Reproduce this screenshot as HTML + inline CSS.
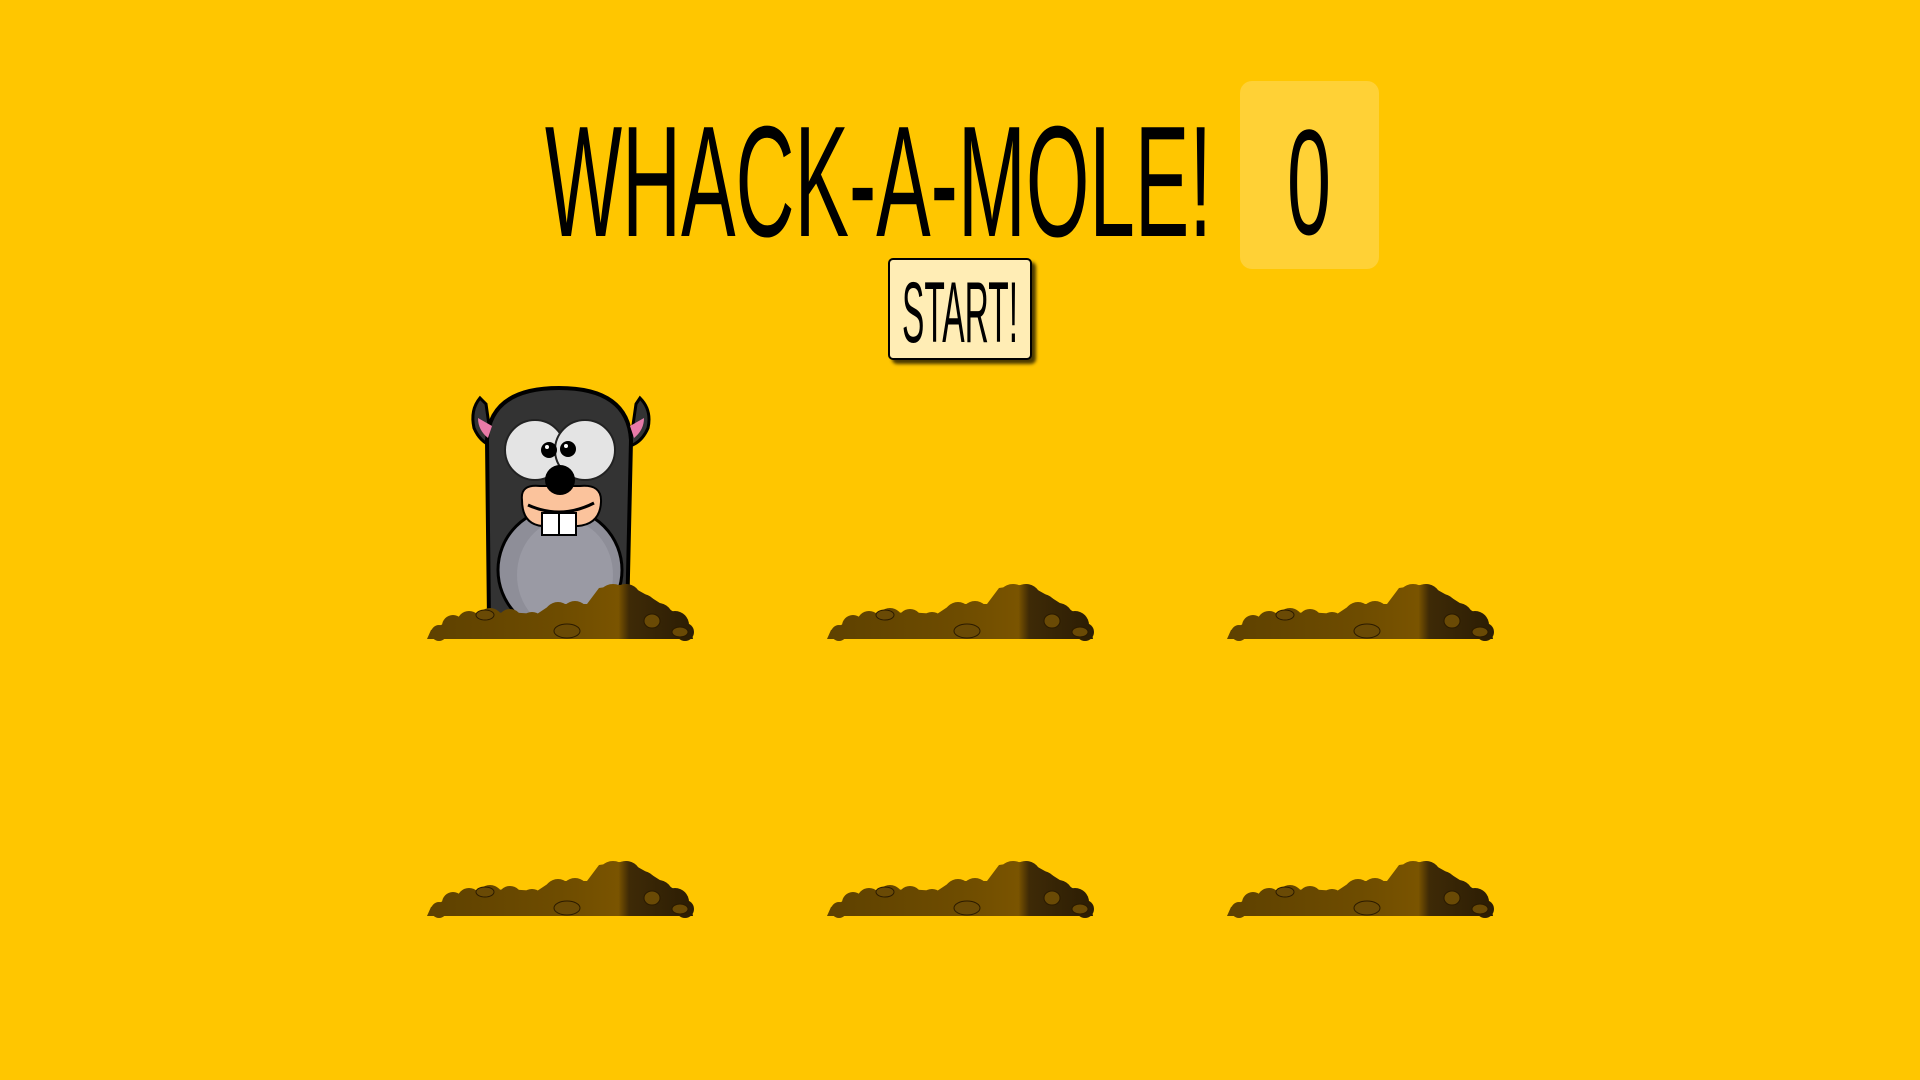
<!DOCTYPE html>
<html><head><meta charset="utf-8"><style>
html,body{margin:0;padding:0;width:1920px;height:1080px;background:#ffc600;overflow:hidden;font-family:"Liberation Sans Narrow","Liberation Sans",sans-serif}
#score{position:absolute;left:1240px;top:81px;width:139px;height:188px;background:#ffd136;border-radius:12px}
#btn{position:absolute;left:888px;top:258px;width:140px;height:98px;background:#ffedb5;border:2px solid #000;border-radius:5px;box-shadow:4px 4px 3px rgba(0,0,0,.7)}
svg{position:absolute;left:0;top:0}
</style></head><body>
<div id="score"></div>
<div id="btn"></div>
<svg width="1920" height="1080" viewBox="0 0 1920 1080">
<defs>
<linearGradient id="dg" gradientUnits="userSpaceOnUse" x1="0" x2="266" y1="0" y2="0">
<stop offset="0" stop-color="#5e4100"/><stop offset="0.5" stop-color="#6e4c00"/>
<stop offset="0.72" stop-color="#7a5400"/><stop offset="0.76" stop-color="#3e2a06"/><stop offset="1" stop-color="#2c1d04"/>
</linearGradient>
<g id="dirt">
<g fill="url(#dg)">
<path d="M0 61 L4 52 L20 44 L40 38 L80 34 L110 36 L125 26 L160 26 L172 10 L200 6 L225 20 L250 36 L264 50 L266 61 Z"/>
<circle cx="12" cy="55" r="8"/><circle cx="26" cy="48" r="11"/><circle cx="42" cy="45" r="12"/>
<circle cx="63" cy="43" r="13"/><circle cx="83" cy="43" r="12"/><circle cx="105" cy="46" r="12"/>
<circle cx="131" cy="38" r="14"/><circle cx="148" cy="37" r="14"/><circle cx="171" cy="42" r="14"/>
<circle cx="186" cy="22" r="16"/><circle cx="199" cy="21" r="15"/><circle cx="192" cy="42" r="19"/>
<circle cx="215" cy="31" r="15"/><circle cx="231" cy="40" r="15"/><circle cx="248" cy="47" r="14"/><circle cx="258" cy="54" r="9"/>
</g>
<g fill="#6a4a05" stroke="#2a1a00" stroke-width="1">
<ellipse cx="58" cy="37" rx="9" ry="5"/><ellipse cx="140" cy="53" rx="13" ry="7"/><ellipse cx="225" cy="43" rx="8" ry="7"/><ellipse cx="253" cy="54" rx="8" ry="5"/>
</g>
</g>
</defs>
<text x="545" y="236" font-family="Liberation Sans Narrow, Liberation Sans, sans-serif" font-size="158" textLength="667" lengthAdjust="spacingAndGlyphs" fill="#000">WHACK-A-MOLE!</text>
<text x="1309" y="234" text-anchor="middle" font-family="Liberation Sans Narrow, Liberation Sans, sans-serif" font-size="150" textLength="44" lengthAdjust="spacingAndGlyphs" fill="#000">0</text>
<text x="902" y="342" font-family="Liberation Sans Narrow, Liberation Sans, sans-serif" font-size="86" textLength="116" lengthAdjust="spacingAndGlyphs" fill="#000">START!</text>
<!-- mole -->
<g>
<path d="M486 404 L482 400 L480 398 Q470 410 474 428 Q480 442 492 446 Z" fill="#333" stroke="#000" stroke-width="3"/>
<path d="M636 404 L640 398 Q652 410 648 428 Q642 442 630 446 Z" fill="#333" stroke="#000" stroke-width="3"/>
<path d="M489 620 L487 440 Q490 388 559 388 Q628 388 631 440 L627 620 Z" fill="#333" stroke="#000" stroke-width="4"/>
<path d="M478 418 L492 426 L488 438 Q478 430 478 418Z" fill="#e87aa8"/>
<path d="M644 418 L630 426 L634 438 Q644 430 644 418Z" fill="#e87aa8"/>
<ellipse cx="560" cy="570" rx="62" ry="62" fill="#8e8e98" stroke="#000" stroke-width="3"/>
<ellipse cx="565" cy="575" rx="48" ry="55" fill="#9a9aa4"/>
<ellipse cx="535" cy="450" rx="30" ry="30" fill="#e4e4e4" stroke="#222" stroke-width="2"/>
<ellipse cx="585" cy="450" rx="30" ry="30" fill="#e4e4e4" stroke="#222" stroke-width="2"/>
<circle cx="549" cy="450" r="8" fill="#000"/><circle cx="568" cy="449" r="8" fill="#000"/>
<circle cx="547" cy="447" r="2" fill="#fff"/><circle cx="566" cy="446" r="2" fill="#fff"/>
<path d="M522 500 Q520 484 540 486 L580 486 Q602 484 601 502 Q600 524 578 526 L542 526 Q522 524 522 500Z" fill="#fbc39c" stroke="#000" stroke-width="2"/>
<path d="M528 505 Q561 520 594 503" fill="none" stroke="#000" stroke-width="3"/>
<rect x="542" y="513" width="17" height="22" fill="#fff" stroke="#000" stroke-width="2"/>
<rect x="559" y="513" width="17" height="22" fill="#fff" stroke="#000" stroke-width="2"/>
<circle cx="560" cy="480" r="15" fill="#000"/>
</g>
<use href="#dirt" x="427" y="578"/>
<use href="#dirt" x="827" y="578"/>
<use href="#dirt" x="1227" y="578"/>
<use href="#dirt" x="427" y="855"/>
<use href="#dirt" x="827" y="855"/>
<use href="#dirt" x="1227" y="855"/>
</svg>
</body></html>
